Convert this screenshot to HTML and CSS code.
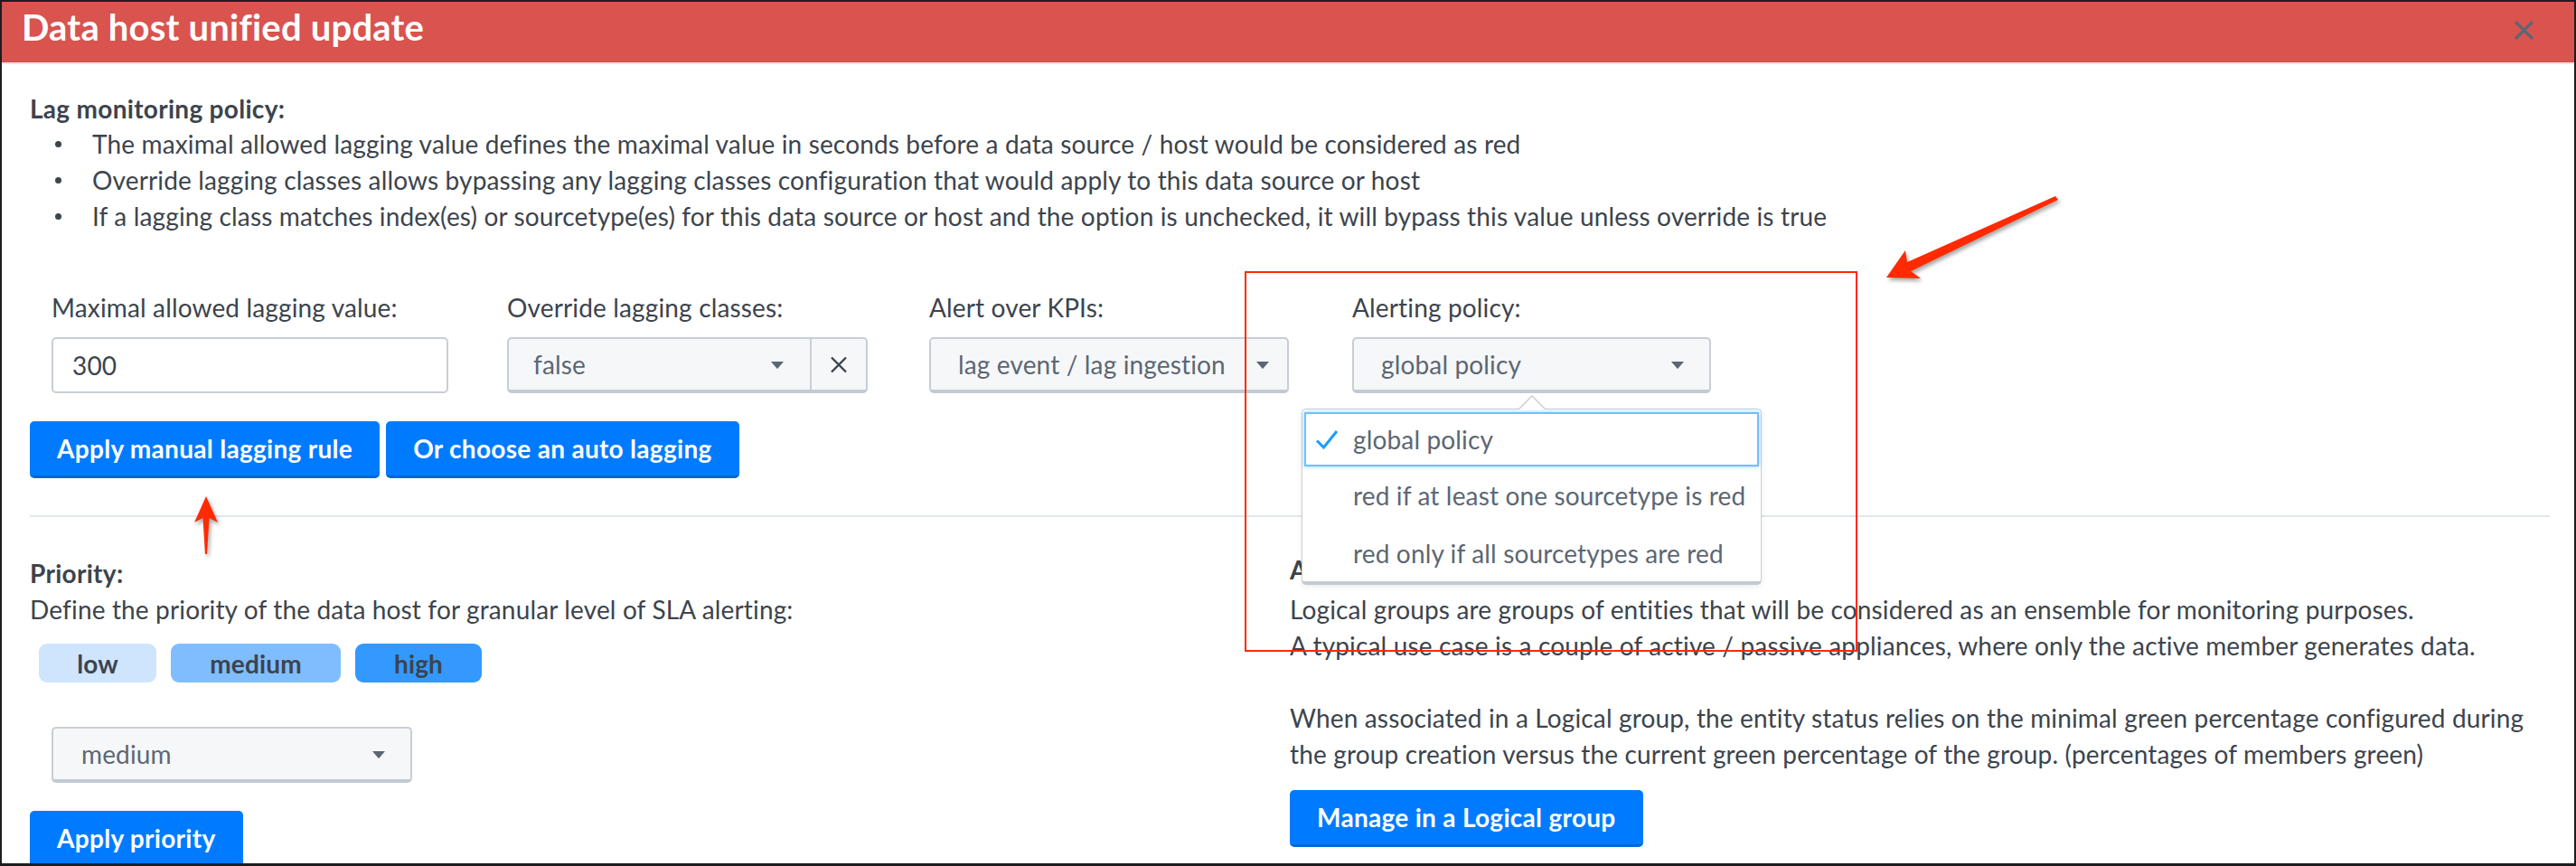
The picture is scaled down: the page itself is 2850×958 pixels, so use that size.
FILE: index.html
```html
<!DOCTYPE html>
<html lang="en">
<head>
<meta charset="utf-8">
<title>Data host unified update</title>
<link rel="stylesheet" href="styles.css">
</head>
<body>
<div class="screen">
  <div class="modal">
    <div class="modal-header">
      <h1 class="modal-title">Data host unified update</h1>
      <span class="close">
        <svg width="21" height="21" viewBox="0 0 21 21"><path d="M2 2 L19 19 M19 2 L2 19" stroke="#5c6773" stroke-width="3.2" stroke-linecap="round"/></svg>
      </span>
    </div>
    <div class="modal-body">
      <h2 class="section-title">Lag monitoring policy:</h2>
      <ul class="bullets">
        <li>The maximal allowed lagging value defines the maximal value in seconds before a data source / host would be considered as red</li>
        <li>Override lagging classes allows bypassing any lagging classes configuration that would apply to this data source or host</li>
        <li>If a lagging class matches index(es) or sourcetype(es) for this data source or host and the option is unchecked, it will bypass this value unless override is true</li>
      </ul>

      <div class="form-row">
        <div class="field field-lag">
          <label class="field-label">Maximal allowed lagging value:</label>
          <div class="text-input">300</div>
        </div>
        <div class="field field-override">
          <label class="field-label">Override lagging classes:</label>
          <div class="select select-clear">
            <span class="select-main">
              <span class="select-value">false</span>
              <svg class="caret" width="14" height="8" viewBox="0 0 14 8"><path d="M0 0 H14 L7.6 7.4 Q7 8 6.4 7.4 Z" fill="#5c6773"/></svg>
            </span>
            <span class="select-x">
              <svg width="20" height="19" viewBox="0 0 20 19"><path d="M2 1.5 L18 17.5 M18 1.5 L2 17.5" stroke="#3c444d" stroke-width="2.4"/></svg>
            </span>
          </div>
        </div>
        <div class="field field-kpi">
          <label class="field-label">Alert over KPIs:</label>
          <div class="select">
            <span class="select-value">lag event / lag ingestion</span>
            <svg class="caret" width="14" height="8" viewBox="0 0 14 8"><path d="M0 0 H14 L7.6 7.4 Q7 8 6.4 7.4 Z" fill="#5c6773"/></svg>
          </div>
        </div>
        <div class="field field-policy">
          <label class="field-label">Alerting policy:</label>
          <div class="select">
            <span class="select-value">global policy</span>
            <svg class="caret" width="14" height="8" viewBox="0 0 14 8"><path d="M0 0 H14 L7.6 7.4 Q7 8 6.4 7.4 Z" fill="#5c6773"/></svg>
          </div>
        </div>
      </div>

      <div class="btn-row">
        <button class="btn">Apply manual lagging rule</button>
        <button class="btn">Or choose an auto lagging</button>
      </div>

      <div class="divider"></div>

      <div class="columns">
        <div class="col-left">
          <h2 class="section-title">Priority:</h2>
          <p class="text-line">Define the priority of the data host for granular level of SLA alerting:</p>
          <div class="badges">
            <span class="badge badge-low">low</span>
            <span class="badge badge-medium">medium</span>
            <span class="badge badge-high">high</span>
          </div>
          <div class="select select-priority">
            <span class="select-value">medium</span>
            <svg class="caret" width="14" height="8" viewBox="0 0 14 8"><path d="M0 0 H14 L7.6 7.4 Q7 8 6.4 7.4 Z" fill="#5c6773"/></svg>
          </div>
          <div class="btn-row btn-row-priority">
            <button class="btn">Apply priority</button>
          </div>
        </div>
        <div class="col-right">
          <h2 class="section-title">Associate to a Logical group:</h2>
          <p class="text-line">Logical groups are groups of entities that will be considered as an ensemble for monitoring purposes.</p>
          <p class="text-line">A typical use case is a couple of active / passive appliances, where only the active member generates data.</p>
          <p class="text-line text-gap">When associated in a Logical group, the entity status relies on the minimal green percentage configured during</p>
          <p class="text-line">the group creation versus the current green percentage of the group. (percentages of members green)</p>
          <div class="btn-row btn-row-group">
            <button class="btn">Manage in a Logical group</button>
          </div>
        </div>
      </div>
    </div>
  </div>

  <div class="dropdown">
    <div class="dropdown-item is-selected">
      <span class="check"><svg width="26" height="22" viewBox="0 0 26 22"><path d="M2 12.5 L9.5 20 L24 2" fill="none" stroke="#1a9cff" stroke-width="3"/></svg></span>
      <span>global policy</span>
    </div>
    <div class="dropdown-item">
      <span class="check"></span>
      <span>red if at least one sourcetype is red</span>
    </div>
    <div class="dropdown-item">
      <span class="check"></span>
      <span>red only if all sourcetypes are red</span>
    </div>
  </div>

  <svg class="annotations" width="2850" height="958" viewBox="0 0 2850 958">
    <rect x="1378" y="301" width="676" height="419" fill="none" stroke="#ff2a00" stroke-width="2"/>
    <g class="arrow">
      <polygon points="2274,217 2110,290 2108,277 2087,307 2125,308 2114,300 2277,221" fill="#ff2a00"/>
      <polygon points="228,549 241,578 231.5,573 229,613 227,613 224.5,573 215,578" fill="#ff2a00"/>
    </g>
  </svg>
</div>
</body>
</html>
```

FILE: styles.css
```css
* {
  box-sizing: border-box;
}

html,
body {
  margin: 0;
  padding: 0;
}

body {
  background: #1d1d1f;
  font-family: "Lato", "Liberation Sans", sans-serif;
  color: #3c444d;
}

.screen {
  position: relative;
  width: 2850px;
  height: 958px;
  padding: 2px 2px 0 2px;
  overflow: hidden;
}

.modal {
  background: #ffffff;
  height: 953px;
  overflow: hidden;
}

/* Header */
.modal-header {
  height: 69px;
  background: #d9534f;
  border-bottom: 2px solid #e6e6e6;
  display: flex;
  justify-content: space-between;
  align-items: flex-start;
  padding: 8px 45px 0 22px;
}

.modal-title {
  margin: 0;
  color: #ffffff;
  font-size: 40px;
  line-height: 40px;
  font-weight: 700;
  letter-spacing: 0.2px;
}

.close {
  display: flex;
  margin-top: 13px;
}

/* Body */
.modal-body {
  padding: 30px 27px 0 31px;
  font-size: 28px;
  letter-spacing: 0.15px;
}

.section-title {
  margin: 0;
  font-size: 28px;
  font-weight: 700;
  line-height: 38px;
  letter-spacing: 0.3px;
}

.bullets {
  margin: 0;
  padding: 0;
  list-style: none;
}

.bullets li {
  display: flex;
  align-items: center;
  line-height: 40px;
}

.bullets li::before {
  content: "";
  flex: none;
  width: 7px;
  height: 7px;
  border-radius: 50%;
  background: #3c444d;
  margin: 0 34px 0 28px;
}

/* Form row */
.form-row {
  display: flex;
  margin-top: 61px;
  padding-left: 24px;
}

.field-label {
  display: block;
  line-height: 40px;
  margin-bottom: 13px;
  white-space: nowrap;
}

.field-lag {
  width: 439px;
  margin-right: 65px;
}

.field-override {
  width: 399px;
  margin-right: 68px;
}

.field-kpi {
  width: 398px;
  margin-right: 70px;
}

.field-policy {
  width: 397px;
}

.text-input {
  height: 62px;
  border: 2px solid #c8ced6;
  border-radius: 5px;
  background: #ffffff;
  display: flex;
  align-items: center;
  padding-left: 21px;
  color: #3c444d;
}

.select {
  height: 62px;
  border: 2px solid #c8ced6;
  border-bottom: 4px solid #c3cad3;
  border-radius: 5px;
  background: #f6f7f9;
  display: flex;
  align-items: center;
  justify-content: space-between;
  padding: 0 28px 0 30px;
  color: #5c6773;
  white-space: nowrap;
}

.select .caret {
  flex: none;
  margin-top: 2px;
}

.field-kpi .select {
  padding-right: 20px;
}

.select-clear {
  padding: 0;
}

.select-main {
  flex: 1;
  height: 100%;
  display: flex;
  align-items: center;
  justify-content: space-between;
  padding: 0 29px 0 27px;
  border-right: 2px solid #c8ced6;
}

.select-x {
  width: 60px;
  height: 100%;
  display: flex;
  align-items: center;
  justify-content: center;
}

/* Buttons */
.btn-row {
  display: flex;
  gap: 7px;
  margin-top: 31px;
}

.btn {
  height: 63px;
  padding: 0 30px;
  border: 0;
  border-bottom: 3px solid #0067d8;
  border-radius: 5px;
  background: #007bff;
  color: #ffffff;
  font-family: inherit;
  font-size: 28px;
  font-weight: 700;
  letter-spacing: 0.3px;
}

.divider {
  height: 2px;
  background: #e3e7eb;
  margin-top: 41px;
}

/* Columns */
.columns {
  display: grid;
  grid-template-columns: 1394px 1fr;
  margin-top: 42px;
}

.col-left .section-title {
  line-height: 40px;
}

.col-right .section-title {
  line-height: 32px;
  margin-bottom: 8px;
}

.text-line {
  margin: 0;
  line-height: 40px;
  white-space: nowrap;
}

.text-gap {
  margin-top: 40px;
}

.badges {
  display: flex;
  gap: 16px;
  margin-top: 18px;
  padding-left: 10px;
}

.badge {
  height: 43px;
  border-radius: 9px;
  display: flex;
  align-items: center;
  justify-content: center;
  font-weight: 700;
  color: #3c444d;
}

.badge-low {
  width: 130px;
  background: #cfe4fd;
}

.badge-medium {
  width: 188px;
  background: #80bdff;
}

.badge-high {
  width: 140px;
  background: #3399ff;
}

.select-priority {
  width: 399px;
  margin: 49px 0 0 24px;
  padding-left: 31px;
}

.btn-row-group {
  margin-top: 20px;
}

/* Dropdown popover */
.dropdown {
  position: absolute;
  left: 1440px;
  top: 452px;
  width: 509px;
  height: 195px;
  background: #ffffff;
  border: 1px solid #c8ced6;
  border-bottom: 4px solid #c3cad3;
  border-radius: 5px;
  box-shadow: 0 2px 6px rgba(0, 0, 0, 0.08);
  font-size: 28px;
  letter-spacing: 0.15px;
  color: #5c6773;
  padding-top: 3px;
}

.dropdown::before,
.dropdown::after {
  content: "";
  position: absolute;
  left: 254px;
  border-style: solid;
  border-color: transparent;
}

.dropdown::before {
  top: -16px;
  margin-left: -15px;
  border-width: 0 15px 15px 15px;
  border-bottom-color: #c8ced6;
}

.dropdown::after {
  top: -14px;
  margin-left: -14px;
  border-width: 0 14px 14px 14px;
  border-bottom-color: #ffffff;
}

.dropdown-item {
  height: 64px;
  display: flex;
  align-items: center;
  gap: 16px;
  padding-left: 14px;
  white-space: nowrap;
}

.dropdown-item.is-selected {
  height: 60px;
  margin: 0 2px;
  padding-left: 10px;
  border: 2px solid #6cc2ff;
  box-shadow: 0 0 4px rgba(26, 156, 255, 0.5);
  color: #5c6773;
}

.check {
  width: 26px;
  height: 22px;
  display: flex;
}

/* Annotation overlay */
.annotations {
  position: absolute;
  left: 0;
  top: 0;
  pointer-events: none;
}

.arrow {
  filter: drop-shadow(2px 3px 2px rgba(0, 0, 0, 0.35));
}
```
